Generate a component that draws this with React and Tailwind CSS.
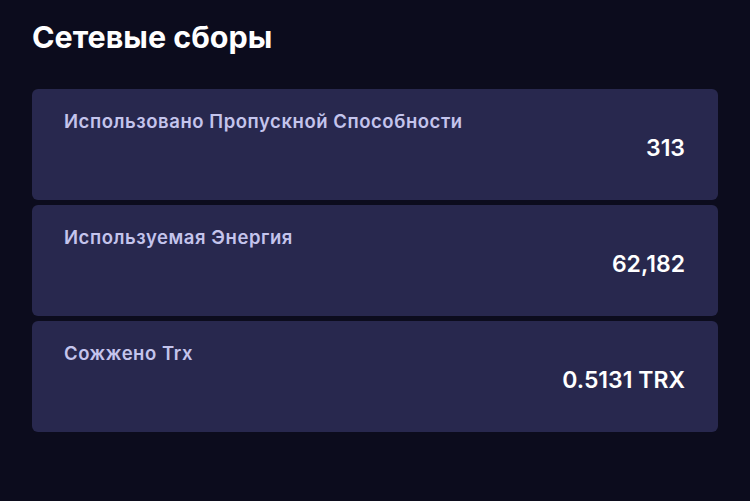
import React from "react";

const rows = [
  { label: "Использовано Пропускной Способности", value: "313" },
  { label: "Используемая Энергия", value: "62,182" },
  { label: "Сожжено Trx", value: "0.5131 TRX" },
];

const App = () => {
  return (
    <div className="w-[750px] h-[501px] bg-[#0c0c1d] px-8 pt-[19px] font-['Inter',sans-serif]">
      <h1 className="text-[30.5px] leading-[36px] font-bold text-white">Сетевые сборы</h1>

      <div className="mt-[34px] flex flex-col gap-[5px]">
        {rows.map((r) => (
          <div key={r.label} className="h-[111px] rounded-[6px] bg-[#28284e] pl-8 pr-[33px] pt-[20px]">
            <p className="text-[18.5px] leading-[24px] tracking-[0.55px] font-semibold text-[#c4c4ec]">{r.label}</p>
            <p className="mt-[1px] text-right text-[23px] leading-[28px] font-semibold text-white">{r.value}</p>
          </div>
        ))}
      </div>
    </div>
  );
};

export default App;
